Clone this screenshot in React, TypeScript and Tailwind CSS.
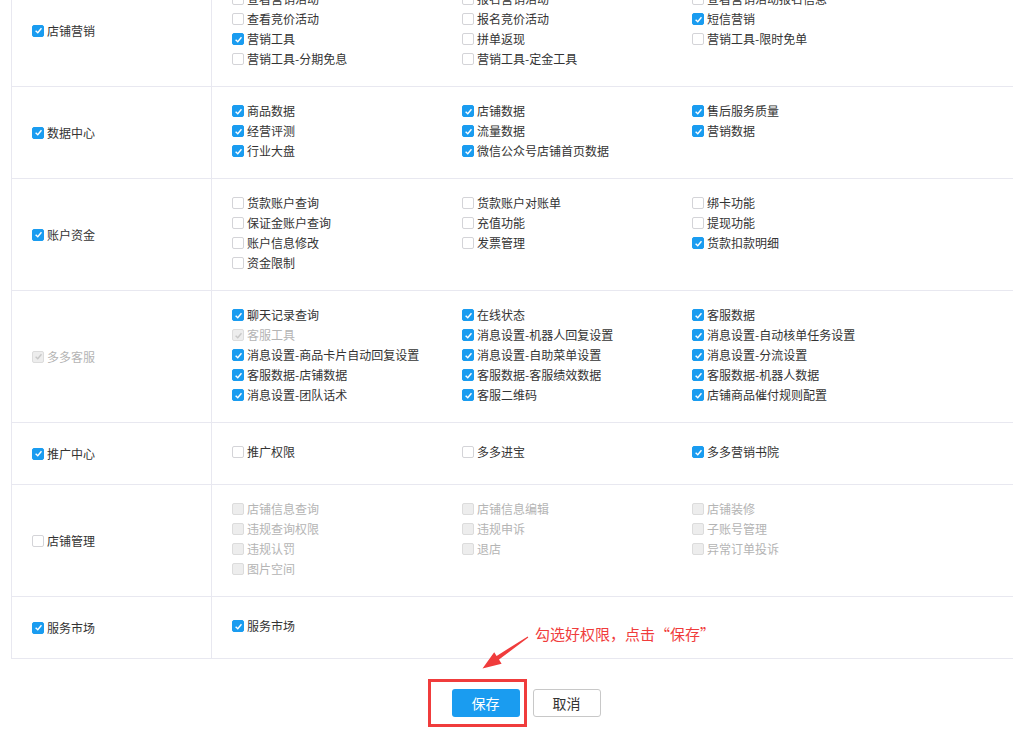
type Item = { label: string; checked?: boolean; disabled?: boolean };
type Row = { title: string; checked?: boolean; disabled?: boolean; items: Item[] };

const rows: Row[] = [
  {
    title: "店铺营销",
    checked: true,
    items: [
      { label: "查看营销活动" },
      { label: "报名营销活动" },
      { label: "查看营销活动报名信息" },
      { label: "查看竞价活动" },
      { label: "报名竞价活动" },
      { label: "短信营销", checked: true },
      { label: "营销工具", checked: true },
      { label: "拼单返现" },
      { label: "营销工具-限时免单" },
      { label: "营销工具-分期免息" },
      { label: "营销工具-定金工具" },
    ],
  },
  {
    title: "数据中心",
    checked: true,
    items: [
      { label: "商品数据", checked: true },
      { label: "店铺数据", checked: true },
      { label: "售后服务质量", checked: true },
      { label: "经营评测", checked: true },
      { label: "流量数据", checked: true },
      { label: "营销数据", checked: true },
      { label: "行业大盘", checked: true },
      { label: "微信公众号店铺首页数据", checked: true },
    ],
  },
  {
    title: "账户资金",
    checked: true,
    items: [
      { label: "货款账户查询" },
      { label: "货款账户对账单" },
      { label: "绑卡功能" },
      { label: "保证金账户查询" },
      { label: "充值功能" },
      { label: "提现功能" },
      { label: "账户信息修改" },
      { label: "发票管理" },
      { label: "货款扣款明细", checked: true },
      { label: "资金限制" },
    ],
  },
  {
    title: "多多客服",
    checked: true,
    disabled: true,
    items: [
      { label: "聊天记录查询", checked: true },
      { label: "在线状态", checked: true },
      { label: "客服数据", checked: true },
      { label: "客服工具", checked: true, disabled: true },
      { label: "消息设置-机器人回复设置", checked: true },
      { label: "消息设置-自动核单任务设置", checked: true },
      { label: "消息设置-商品卡片自动回复设置", checked: true },
      { label: "消息设置-自助菜单设置", checked: true },
      { label: "消息设置-分流设置", checked: true },
      { label: "客服数据-店铺数据", checked: true },
      { label: "客服数据-客服绩效数据", checked: true },
      { label: "客服数据-机器人数据", checked: true },
      { label: "消息设置-团队话术", checked: true },
      { label: "客服二维码", checked: true },
      { label: "店铺商品催付规则配置", checked: true },
    ],
  },
  {
    title: "推广中心",
    checked: true,
    items: [
      { label: "推广权限" },
      { label: "多多进宝" },
      { label: "多多营销书院", checked: true },
    ],
  },
  {
    title: "店铺管理",
    items: [
      { label: "店铺信息查询", disabled: true },
      { label: "店铺信息编辑", disabled: true },
      { label: "店铺装修", disabled: true },
      { label: "违规查询权限", disabled: true },
      { label: "违规申诉", disabled: true },
      { label: "子账号管理", disabled: true },
      { label: "违规认罚", disabled: true },
      { label: "退店", disabled: true },
      { label: "异常订单投诉", disabled: true },
      { label: "图片空间", disabled: true },
    ],
  },
  {
    title: "服务市场",
    checked: true,
    items: [{ label: "服务市场", checked: true }],
  },
];

const Box = ({ checked, disabled }: { checked?: boolean; disabled?: boolean }) => {
  let cls = "border-[#d4d4d8] bg-white";
  if (disabled) cls = "border-[#dcdcdc] bg-[#ededed]";
  else if (checked) cls = "border-[#1a9cf0] bg-[#1a9cf0]";
  return (
    <span
      className={`w-[12px] h-[12px] rounded-[2px] border flex items-center justify-center shrink-0 ${cls}`}
    >
      {checked && (
        <svg width="9" height="9" viewBox="0 0 10 10">
          <polyline
            points="1.8,5.2 4.2,7.4 8.3,2.6"
            fill="none"
            stroke={disabled ? "#c8c8c8" : "#ffffff"}
            strokeWidth="1.6"
          />
        </svg>
      )}
    </span>
  );
};

const Check = ({ label, checked, disabled }: Item) => (
  <label className="flex items-center h-[20px] gap-[3px]">
    <Box checked={checked} disabled={disabled} />
    <span className={`text-[12px] leading-[20px] whitespace-nowrap ${disabled ? "text-[#b4b4b4]" : "text-[#333]"}`}>
      {label}
    </span>
  </label>
);

export default function App() {
  return (
    <div
      className="relative w-full h-[752px] overflow-hidden bg-white"
      style={{ fontFamily: '"Noto Sans CJK SC", "Noto Sans", sans-serif' }}
    >
      <div className="ml-[11px] w-[1030px] -mt-[26px]">
        <div className="border-l border-t border-[#e8e8f0]">
          {rows.map((row) => (
            <div key={row.title} className="flex border-b border-[#e8e8f0]">
              <div className="w-[200px] shrink-0 border-r border-[#e8e8f0] pl-[20px] flex items-center">
                <Check label={row.title} checked={row.checked} disabled={row.disabled} />
              </div>
              <div className="flex-1 min-h-[61px] pl-[20px] pt-[14px] pb-[17px] flex flex-col justify-center">
                <div className="grid grid-cols-[230px_230px_230px]">
                  {row.items.map((it) => (
                    <Check key={it.label} {...it} />
                  ))}
                </div>
              </div>
            </div>
          ))}
        </div>

        <div className="flex justify-center gap-[13px] mt-[30px]">
          <button className="w-[68px] h-[28px] rounded-[3px] bg-[#1a9cf0] text-white text-[14px]">
            保存
          </button>
          <button className="w-[68px] h-[28px] rounded-[3px] border border-[#c8c8c8] bg-white text-[#333] text-[14px]">
            取消
          </button>
        </div>
      </div>

      {/* annotation */}
      <div className="absolute left-[428px] top-[679px] w-[99px] h-[48px] border-[3px] border-[#f03c3c] pointer-events-none" />
      <div className="absolute left-[535px] top-[625px] text-[15px] leading-[18px] text-[#f03c3c] whitespace-nowrap">
        勾选好权限，点击“保存”
      </div>
      <svg
        className="absolute left-0 top-0 pointer-events-none"
        width="1013"
        height="752"
        viewBox="0 0 1013 752"
      >
        <polygon
          points="527.7,636.6 496.6,655.9 494.2,652.2 482.5,668.5 501.6,663.8 499.0,659.6 528.3,637.4"
          fill="#f03c3c"
        />
      </svg>
    </div>
  );
}
